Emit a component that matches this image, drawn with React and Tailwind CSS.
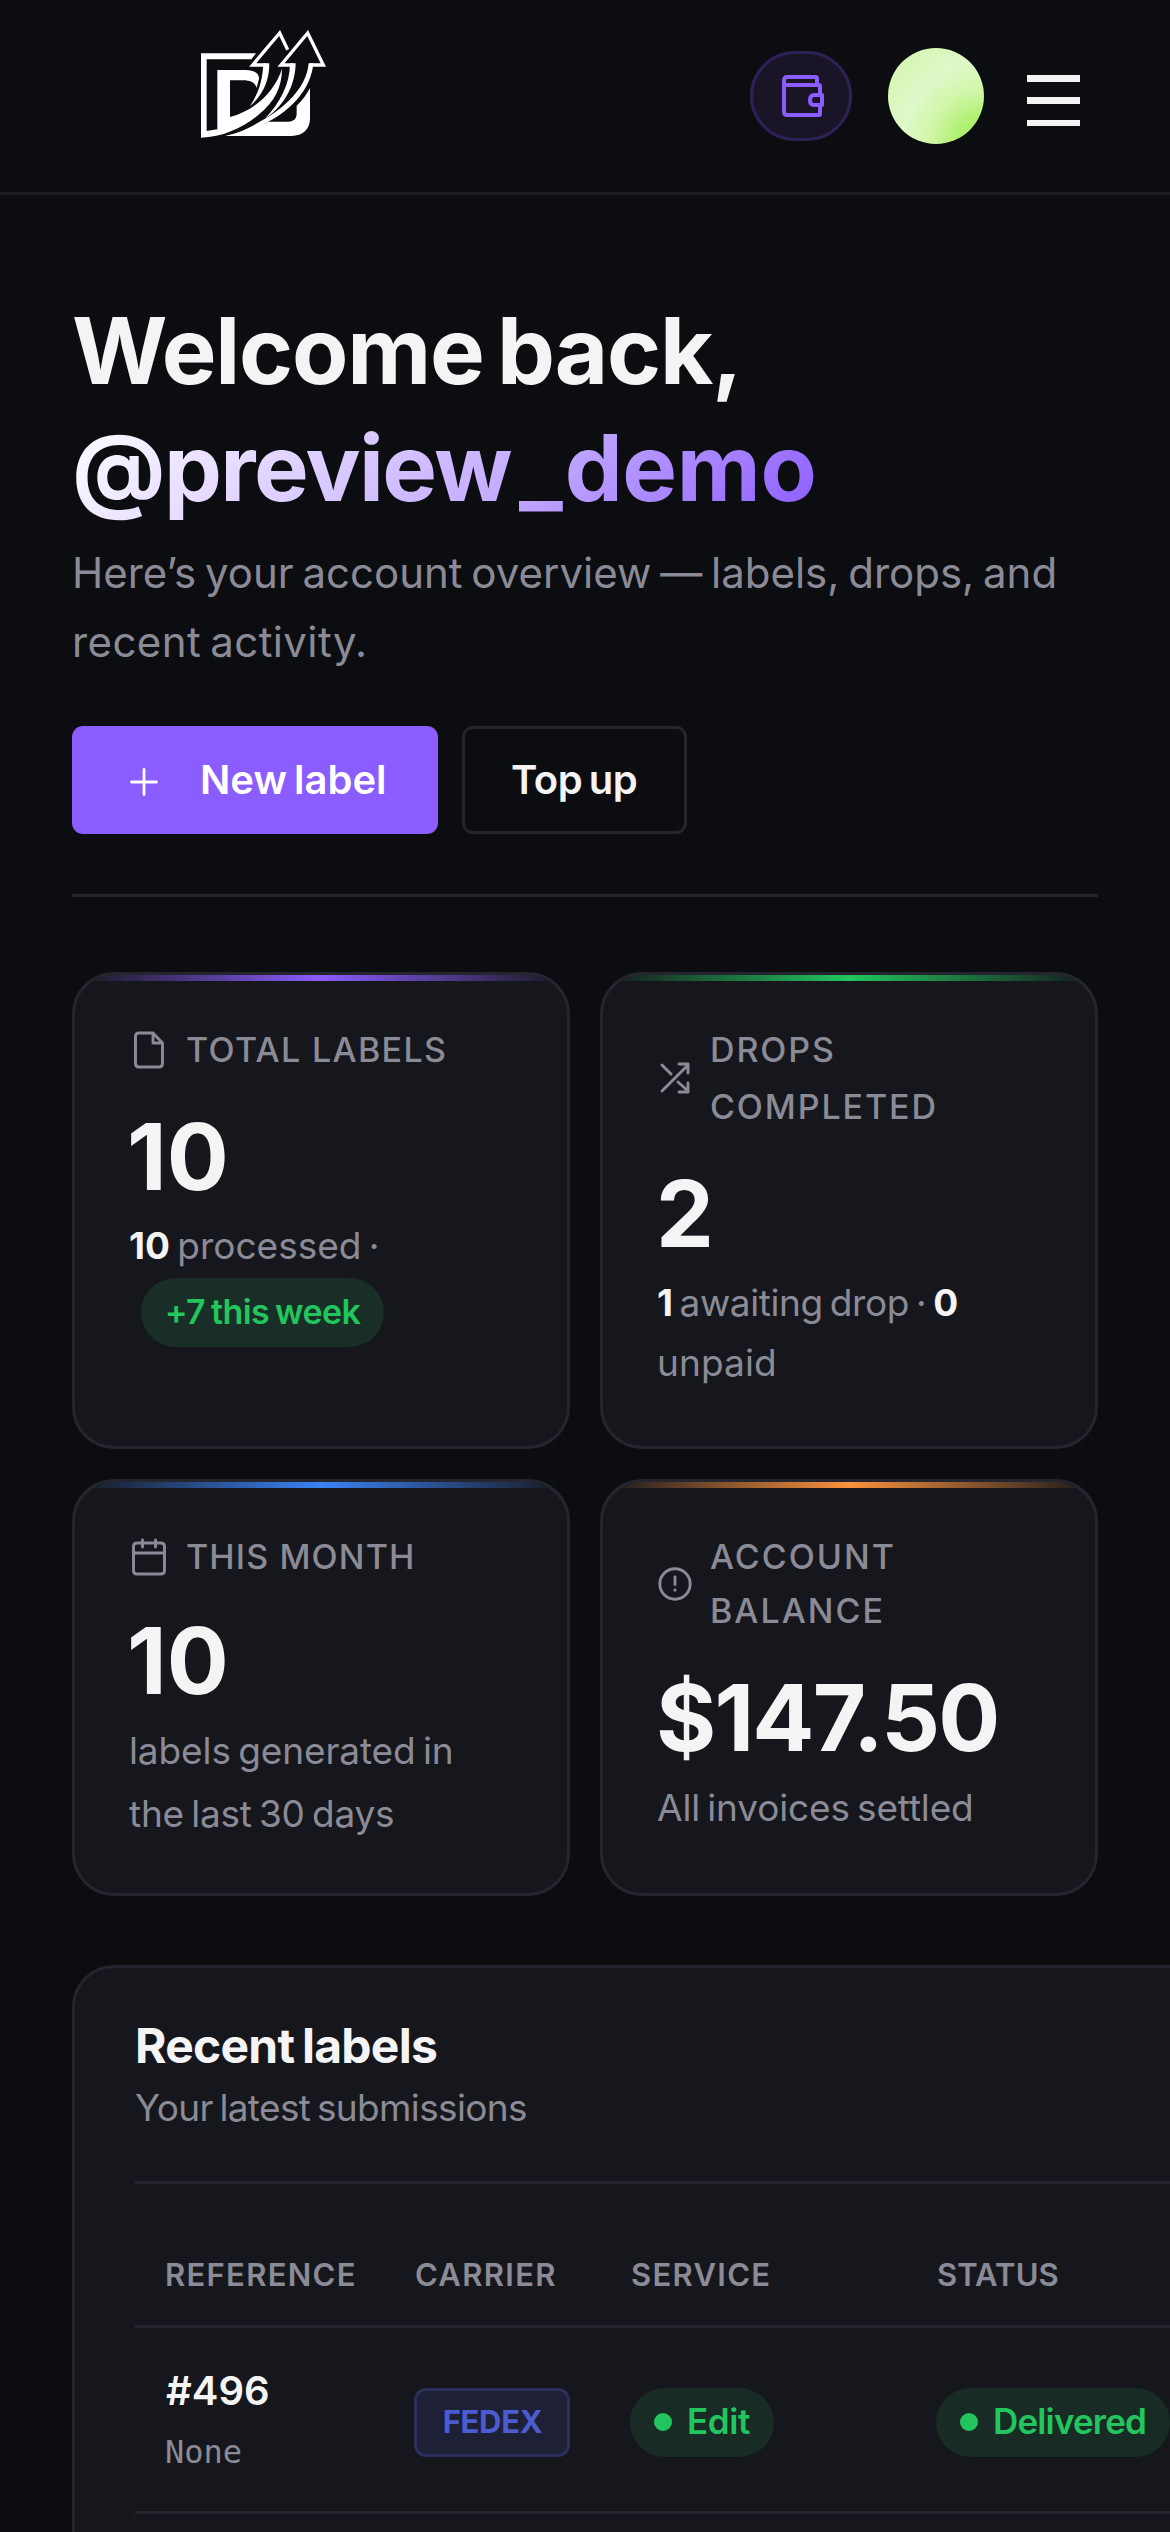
import React from "react";

function Logo() {
  return (
    <svg viewBox="0 0 540 450" className="h-[150px] w-[180px]" fill="none">
      <path
        fill="#fff"
        d="M63 130H228L214 148H80V363L112 358V180H196C224 180 238 192 237 206L230 234C226 219 212 211 190 211H150V321C218 304 282 250 306 176C306 232 282 276 238 312C195 350 130 382 63 383Z"
      />
      <path fill="#fff" d="M390 234V325C390 358 368 378 335 378H135C190 364 232 350 265 335H325C342 335 350 326 350 310V287C366 272 380 254 390 234Z" />
      <path fill="#fff" d="M250 160H268C268 210 250 255 210 288C236 250 248 210 250 160Z" />
      <path stroke="#fff" strokeWidth="10" d="M323 119L299 69L218 165H258" />
      <path fill="#fff" d="M330 160H347C346 220 318 285 256 325C298 280 330 225 330 160Z" />
      <path fill="#fff" d="M386 160H400C392 250 310 340 150 378C286 324 378 250 386 160Z" />
      <path stroke="#fff" strokeWidth="10" d="M340 165H303L383 69L430 165H390" />
    </svg>
  );
}

function WalletIcon() {
  return (
    <svg viewBox="0 0 44 44" className="h-11 w-11" fill="none" stroke="#8b5cff" strokeWidth="4">
      <path d="M36 11V4.500Q36 3 34.500 3H6.500Q3 3 3 6.500V37.500Q3 41 6.500 41H38Q39 41 39 40V31M39 19V12Q39 11 38 11H5" />
      <path d="M41 21V31H33Q29 31 29 26.500Q29 21 33 21Z" strokeLinejoin="round" />
    </svg>
  );
}

const stroke = {
  fill: "none",
  stroke: "currentColor",
  strokeLinecap: "round",
  strokeLinejoin: "round",
};

function FileIcon() {
  return (
    <svg viewBox="0 0 30 38" className="mr-[22px] ml-[5px] h-[38px] w-[30px] shrink-0" strokeWidth="2.900" {...stroke}>
      <path d="M19 2H5Q1.500 2 1.500 5.500V32.500Q1.500 36 5 36H25Q28.500 36 28.500 32.500V12ZM19 2V12H28.500" />
    </svg>
  );
}

function ShuffleIcon() {
  return (
    <svg viewBox="0 0 30 32" className="mr-5 ml-[3px] h-8 w-[30px] shrink-0" strokeWidth="2.900" {...stroke}>
      <path d="M2 3L11 12M2 29L28 3M19 2H28V11M18 20L28 29M19 30H28V21" />
    </svg>
  );
}

function CalendarIcon() {
  return (
    <svg viewBox="0 0 34 38" className="mr-5 ml-[3px] h-[38px] w-[34px] shrink-0" strokeWidth="2.900" {...stroke}>
      <path d="M5 5H29Q32.500 5 32.500 8.500V32.500Q32.500 36 29 36H5Q1.500 36 1.500 32.500V8.500Q1.500 5 5 5ZM1.500 15H32.500M10.500 2V9M23.500 2V9" />
    </svg>
  );
}

function AlertIcon() {
  return (
    <svg viewBox="0 0 34 34" className="mr-[18px] ml-px h-[34px] w-[34px] shrink-0" strokeWidth="2.900" {...stroke}>
      <circle cx="17" cy="17" r="15.200" />
      <path d="M17 10V17.500M17 23V23.200" />
    </svg>
  );
}

function Card({ stripe, children }) {
  return (
    <section className="relative overflow-hidden rounded-[42px] border-[3px] border-[#24252f] bg-[#16171c] px-[54px] pt-[46px]">
      <div className={`absolute inset-x-0 top-0 h-[6px] bg-linear-to-r from-transparent to-transparent ${stripe}`} />
      {children}
    </section>
  );
}

const labelText = "flex items-center text-[34px] font-medium text-[#8b8b97] whitespace-nowrap";
const valueText = "text-[92px] leading-[92px] font-bold text-[#f4f4f5] whitespace-nowrap";
const noteText = "text-[37px] font-normal text-[#8b8b97] whitespace-nowrap [word-spacing:-3px]";
const strong = "font-bold text-[#f4f4f5]";

function Pill({ children, className }) {
  return (
    <span
      className={`inline-flex h-[69px] items-center rounded-full bg-[#182b24] pl-6 text-[35px] leading-[64px] font-semibold text-[#22c55e] ${className}`}
    >
      <span className="-mt-px mr-[15px] h-[18px] w-[18px] rounded-full bg-[#22c55e]" />
      <span className="-mt-1">{children}</span>
    </span>
  );
}

export default function App() {
  return (
    <div className="h-[2532px] w-[1170px] overflow-hidden bg-[#0c0d11] font-[Inter,sans-serif]">
      <header className="flex h-[195px] items-start border-b-[3px] border-[#1b1c21] pt-[10px] pl-[180px]">
        <Logo />
        <button className="mt-[41px] ml-[390px] flex h-[90px] w-[102px] items-center justify-center rounded-[45px] border-[3px] border-[#2f2157] bg-[#191527] pb-px pl-[3px]">
          <WalletIcon />
        </button>
        <div className="mt-[38px] ml-9 h-24 w-24 rounded-full bg-[radial-gradient(circle_at_100%_100%,#9fee50_0%,#b3f176_22%,#d0f6a8_40%,#dff9ca_60%,#d8f7b8_80%,#d4f6b0_100%)]" />
        <div className="mt-[65px] ml-[43px] flex w-[53px] flex-col">
          <span className="mb-[15px] h-[7px] bg-[#f4f4f5]" />
          <span className="mb-4 h-[7px] bg-[#f4f4f5]" />
          <span className="h-[6px] bg-[#f4f4f5]" />
        </div>
      </header>

      <main className="px-[72px] pt-[97px]">
        <div className="border-b-[3px] border-[#24252f] pb-[60px]">
          <h1 className="text-[92px] leading-[117px] font-bold whitespace-nowrap">
            <span className="block tracking-[-1.2px] text-[#f4f4f5] [word-spacing:-7px]">Welcome back,</span>
            <span className="block w-[742px] bg-linear-[135deg,#ffffff_0%,#c4abff_60%,#8b5cff_100%] bg-clip-text text-transparent">
              <span className="tracking-[-1.6px]">@preview</span>
              <span className="mr-[2px] ml-[8px]">_</span>
              <span className="tracking-[-0.35px]">demo</span>
            </span>
          </h1>
          <p className="mt-3 text-[42px] leading-[69px] font-normal whitespace-nowrap text-[#8b8b97] [word-spacing:-3px]">
            <span className="block">Here’s your account overview — labels, drops, and</span>
            <span className="block tracking-[0.4px]">recent activity.</span>
          </p>
          <div className="mt-[50px] flex gap-6 text-[40px] font-semibold whitespace-nowrap">
            <button className="flex h-[108px] w-[366px] items-center rounded-[11px] bg-[#8b5cff] pl-[58px] text-white">
              <svg viewBox="0 0 28 28" className="mt-1 mr-[42px] h-7 w-7" stroke="#fff" strokeWidth="2.800" strokeLinecap="round">
                <path d="M14 1.500V26.500M1.500 14H26.500" />
              </svg>
              <span className="[word-spacing:-3px]">New label</span>
            </button>
            <button className="flex h-[108px] w-[225px] items-center rounded-[11px] border-[3px] border-[#24252f] pl-[46px] tracking-[-0.5px] text-[#f4f4f5] [word-spacing:-3px]">
              Top up
            </button>
          </div>
        </div>

        <div className="mt-[75px] grid grid-cols-2 grid-rows-[477px_417px] gap-[30px]">
          <Card stripe="via-[#8b5cff]">
            <div className={`${labelText} leading-[57px] tracking-[1.34px]`}>
              <FileIcon />
              TOTAL LABELS
            </div>
            <div className={`${valueText} mt-[33px] -ml-[2px]`}>10</div>
            <div className={`${noteText} mt-[13px] leading-[60px]`}>
              <span className={strong}>10</span> processed ·
            </div>
            <span className="mt-[2px] ml-3 inline-flex h-[69px] w-[243px] items-center justify-center rounded-full bg-[#182e26] pb-[2px] text-[34px] font-semibold tracking-[-0.6px] text-[#22c55e] [word-spacing:-2px]">
              +7 this week
            </span>
          </Card>

          <Card stripe="via-[#22c55e]">
            <div className={`${labelText} leading-[57px] tracking-[1.9px]`}>
              <ShuffleIcon />
              <span>
                DROPS
                <br />
                COMPLETED
              </span>
            </div>
            <div className={`${valueText} mt-[33px] -ml-px`}>2</div>
            <div className={`${noteText} mt-[13px] leading-[60px] tracking-[-0.4px]`}>
              <span className={strong}>1</span> awaiting drop · <span className={strong}>0</span>
              <br />
              <span className="tracking-[0.1px]">unpaid</span>
            </div>
          </Card>

          <Card stripe="via-[#3b82f6]">
            <div className={`${labelText} leading-[57px] tracking-[1.13px]`}>
              <CalendarIcon />
              THIS MONTH
            </div>
            <div className={`${valueText} mt-[30px] -ml-[2px]`}>10</div>
            <div className={`${noteText} mt-[12px] leading-[63px]`}>
              <span className="block tracking-[-0.1px]">labels generated in</span>
              <span className="block tracking-[-0.2px]">the last 30 days</span>
            </div>
          </Card>

          <Card stripe="via-[#fb923c]">
            <div className={`${labelText} mt-[2px] leading-[54px] tracking-[2px]`}>
              <AlertIcon />
              <span>
                ACCOUNT
                <br />
                BALANCE
              </span>
            </div>
            <div className={`${valueText} mt-[34px] -ml-px tracking-[-1.8px]`}>$147.50</div>
            <div className={`${noteText} mt-[12px] leading-[63px] tracking-[-0.15px]`}>All invoices settled</div>
          </Card>
        </div>

        <section className="mt-[69px] h-[700px] w-[1300px] rounded-[42px] border-[3px] border-[#24252f] bg-[#16171c] px-[60px] pt-[48px]">
          <div className="border-b-[3px] border-[#24252f] pb-[43px]">
            <h2 className="text-[48px] leading-[60px] font-bold tracking-[-0.75px] text-[#f4f4f5] [word-spacing:-3px]">
              Recent labels
            </h2>
            <p className="mt-[2px] text-[37px] leading-[60px] font-normal tracking-[-0.65px] text-[#8b8b97] [word-spacing:-3px]">
              Your latest submissions
            </p>
          </div>
          <div className="grid h-[144px] grid-cols-[250px_216px_306px_1fr] border-b-[3px] border-[#24252f] pt-[71px] pl-[30px] text-[31px] leading-[40px] font-semibold tracking-[1.3px] text-[#8b8b97]">
            <span>REFERENCE</span>
            <span>CARRIER</span>
            <span>SERVICE</span>
            <span className="tracking-[0.1px]">STATUS</span>
          </div>
          <div className="grid h-[186px] grid-cols-[249px_216px_306px_1fr] items-start border-b-[3px] border-[#24252f] pl-[30px]">
            <div className="pt-[33px]">
              <div className="ml-px text-[40px] leading-[60px] font-semibold text-[#f4f4f5]">#496</div>
              <div className="mt-[7px] font-['DejaVu_Sans_Mono',monospace] text-[32px] leading-[48px] text-[#8b8b97]">
                None
              </div>
            </div>
            <span className="mt-[60px] flex h-[69px] w-[156px] items-center justify-center rounded-[12px] border-[3px] border-[#2b2f5b] bg-[#1e2035] pb-px pl-px text-[31px] font-bold tracking-[-0.3px] text-[#4b5bd0]">
              FEDEX
            </span>
            <div className="pt-[60px]">
              <Pill className="w-[144px] tracking-[-0.4px]">Edit</Pill>
            </div>
            <div className="pt-[60px]">
              <Pill className="w-[234px] tracking-[-0.84px]">Delivered</Pill>
            </div>
          </div>
        </section>
      </main>
    </div>
  );
}
